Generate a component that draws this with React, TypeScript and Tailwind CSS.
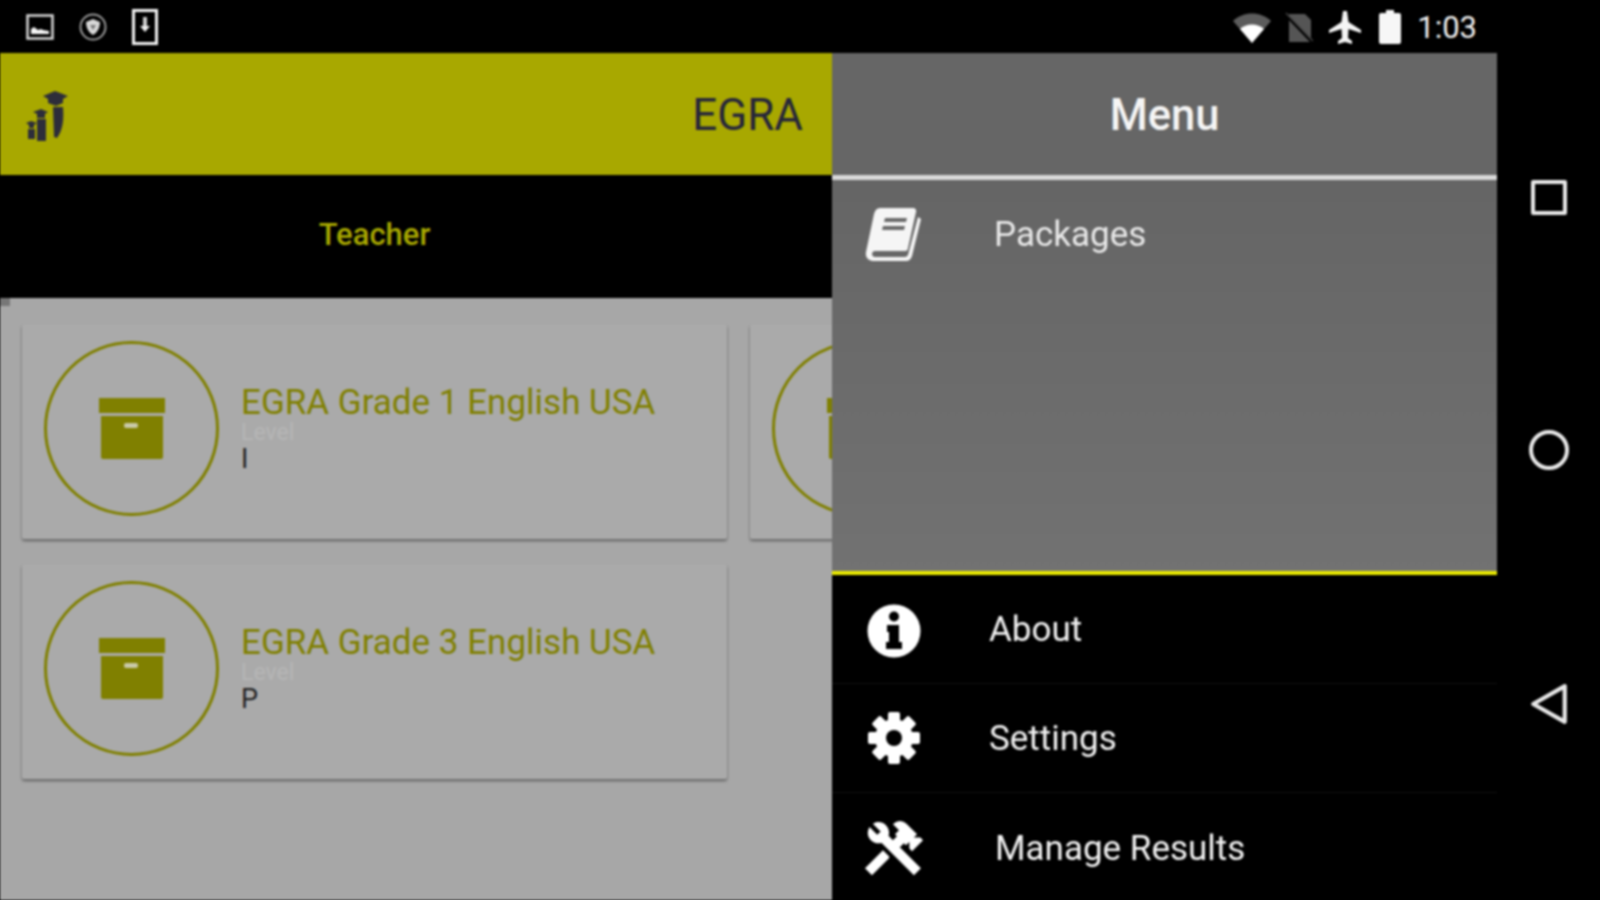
function ArchiveIcon() {
  return (
    <svg width="66" height="62" viewBox="0 0 66 62" className="shrink-0">
      <rect x="0" y="0" width="66" height="15" fill="#808000" />
      <path d="M2 18H64V59a2 2 0 0 1-2 2H4a2 2 0 0 1-2-2Z" fill="#808000" />
      <rect x="25" y="25" width="14" height="5" rx="2" fill="#c9c9a8" />
    </svg>
  );
}

function PackageCard({ title, level }: { title?: string; level?: string }) {
  return (
    <div className="flex h-[215px] w-[705px] shrink-0 items-center rounded-[2px] bg-[#aaaaaa] pb-[6px] pl-[22px] shadow-[0_2px_3px_rgba(0,0,0,0.4)]">
      <div className="flex h-[175px] w-[175px] shrink-0 items-center justify-center rounded-full border-[3px] border-[#808000]">
        <ArchiveIcon />
      </div>
      {title ? (
        <div className="ml-[22px] flex flex-col">
          <div className="text-[35px] leading-[36px] text-[#808000]">{title}</div>
          <div className="text-[23px] leading-[24px] text-[#b6b6b6]">Level</div>
          <div className="text-[27px] leading-[28px] text-[#222222]">{level}</div>
        </div>
      ) : null}
    </div>
  );
}

function DrawerRow({ icon, label, indent, divider }: { icon: React.ReactNode; label: string; indent: string; divider: boolean }) {
  return (
    <div className={`flex h-[109px] items-center pl-[33px] ${divider ? "border-b border-[#111111]" : ""}`}>
      <div className="flex w-[58px] shrink-0 items-center justify-center">{icon}</div>
      <div className={`${indent} pt-[3px] text-[35px] text-[#f2f2f2]`}>{label}</div>
    </div>
  );
}

function InfoIcon() {
  return (
    <svg width="54" height="54" viewBox="0 0 54 54" className="mt-[3px]">
      <circle cx="27" cy="27" r="26.5" fill="#ffffff" />
      <circle cx="27" cy="12.5" r="5" fill="#000000" />
      <path d="M20 21H32V38H35V45H19V38H22V28H20Z" fill="#000000" />
    </svg>
  );
}

function GearIcon() {
  const angles = [0, 45, 90, 135, 180, 225, 270, 315];
  return (
    <svg width="54" height="54" viewBox="0 0 54 54">
      {angles.map((a) => (
        <rect key={a} x="21" y="1" width="12" height="14" rx="2" fill="#ffffff" transform={`rotate(${a} 27 27)`} />
      ))}
      <circle cx="27" cy="27" r="19" fill="#ffffff" />
      <circle cx="27" cy="27" r="8" fill="#000000" />
    </svg>
  );
}

export default function App() {
  return (
    <div className="h-[900px] w-[1600px] overflow-hidden bg-black">
      <div className="flex h-[900px] w-[1600px] flex-col bg-black blur-[0.8px] font-['Roboto',sans-serif]">
        {/* status bar */}
        <div className="flex h-[53px] shrink-0 items-center justify-between pl-[26px] pr-[123px]">
          <div className="flex items-center gap-[25px]">
            <svg width="28" height="26" viewBox="0 0 28 26">
              <rect x="1.5" y="1.5" width="25" height="23" fill="none" stroke="#d8d8d8" strokeWidth="2.5" />
              <path d="M5 20V15l3-2 4 3 3-1 2 1 6 1v3Z" fill="#f5f5f5" />
            </svg>
            <svg width="28" height="28" viewBox="0 0 28 28">
              <circle cx="14" cy="14" r="12.5" fill="none" stroke="#9a9a9a" strokeWidth="2" />
              <path d="M7 9l7-3 7 3c0 6-3 11-7 13-4-2-7-7-7-13Z" fill="#d8d8d8" />
              <path d="M11 12h6l-3 5Z" fill="#777777" />
            </svg>
            <svg width="26" height="36" viewBox="0 0 26 36">
              <rect x="1.5" y="1.5" width="23" height="33" fill="none" stroke="#f2f2f2" strokeWidth="3" />
              <rect x="11" y="8" width="4" height="9" fill="#cccccc" />
              <path d="M8 17h10l-5 6Z" fill="#f2f2f2" />
            </svg>
          </div>
          <div className="flex items-center">
            <svg width="38" height="30" viewBox="0 0 38 30" className="mt-[2px]">
              <path d="M0 8C10-2 28-2 38 8L19 30Z" fill="#5c5c5c" />
              <path d="M7 16C13 10 25 10 31 16L19 30Z" fill="#ffffff" />
            </svg>
            <svg width="28" height="32" viewBox="0 0 28 32" className="ml-[14px] mt-[2px]">
              <path d="M4 2H20L26 8V30H4Z" fill="#555555" />
              <path d="M1 3L28 31" stroke="#000000" strokeWidth="3" />
              <path d="M1 1L28 29" stroke="#444444" strokeWidth="1.5" />
            </svg>
            <svg width="32" height="36" viewBox="0 0 32 36" className="ml-[16px] mt-[2px]">
              <path d="M14 1h4l1.5 11L32 20v3l-12.5-4-.5 9 4 3v3l-7-2-7 2v-3l4-3-.5-9L0 23v-3l12.5-8Z" fill="#f5f5f5" />
            </svg>
            <svg width="22" height="34" viewBox="0 0 22 34" className="ml-[18px] mt-[1px]">
              <path d="M7 0h8v3h5a2 2 0 0 1 2 2v27a2 2 0 0 1-2 2H2a2 2 0 0 1-2-2V5a2 2 0 0 1 2-2h5Z" fill="#f7f7f7" />
            </svg>
            <div className="ml-[16px] mt-[2px] text-[31px] leading-none text-[#f2f2f2]">1:03</div>
          </div>
        </div>

        <div className="flex min-h-0 flex-1">
          {/* main app */}
          <div className="flex w-[832px] shrink-0 flex-col overflow-hidden bg-[#a7a7a7]">
            <div className="flex h-[122px] shrink-0 items-center justify-between bg-[#a8a800] pl-[26px] pr-[29px]">
              <svg width="42" height="54" viewBox="0 0 42 54" className="mt-[3px]">
                <path d="M17 7L29 2l13 5-5 3v4l-7 3-8-3v-4Z" fill="#2d2d3a" />
                <path d="M27 18h10c1 12 0 23-6 31l-3-1Z" fill="#2d2d3a" />
                <path d="M7 23l8-3 7 3-3 2v4h-8v-4Z" fill="#2d2d3a" />
                <rect x="11" y="30" width="9" height="22" fill="#2d2d3a" />
                <path d="M0 34l5-2 6 2-3 2v3H3v-3Z" fill="#2d2d3a" />
                <rect x="2" y="40" width="7" height="10" fill="#2d2d3a" />
              </svg>
              <div className="pt-[1px] text-[44px] leading-none text-[#26263a]">EGRA</div>
            </div>
            <div className="h-[123px] shrink-0 bg-black">
              <div className="flex h-[121px] w-[749px] items-center justify-center">
                <div className="text-[31px] font-medium text-[#a8a800]">Teacher</div>
              </div>
            </div>
            <div className="h-[8px] w-[10px] shrink-0 bg-[#777777]" />
            <div className="flex flex-col gap-[25px] pl-[22px] pt-[18px]">
              <div className="flex gap-[23px]">
                <PackageCard title="EGRA Grade 1 English USA" level="I" />
                <PackageCard />
              </div>
              <PackageCard title="EGRA Grade 3 English USA" level="P" />
            </div>
          </div>

          {/* drawer */}
          <div className="flex w-[665px] shrink-0 flex-col">
            <div className="flex h-[122px] shrink-0 items-center justify-center bg-[#666666] pt-[3px]">
              <div className="text-[43.5px] font-medium leading-none text-[#f5f5f5]">Menu</div>
            </div>
            <div className="h-[5px] shrink-0 bg-[#d9d9d9]" />
            <div className="h-[391px] shrink-0 bg-[linear-gradient(180deg,#656565_0%,#727272_100%)]">
              <div className="flex h-[107px] items-center pl-[33px]">
                <div className="flex w-[58px] shrink-0 items-center justify-center">
                  <svg width="60" height="56" viewBox="0 0 58 54">
                    <path d="M15 1H48a3 3 0 0 1 3 4L43 41a3 3 0 0 1-3 3H10c-4 0-4 6 0 6h30a4 4 0 0 0 3-2L53 10l3 2-9 37c-1 3-3 5-6 5H9c-5 0-9-3-8-9L9 7c1-4 3-6 6-6Z" fill="#f5f5f5" />
                    <path d="M20 11H42L41 15H19Z M18 19H40L39 23H17Z" fill="#6a6a6a" />
                  </svg>
                </div>
                <div className="ml-[71px] pt-[3px] text-[35px] text-[#e8e8e8]">Packages</div>
              </div>
            </div>
            <div className="h-[4px] shrink-0 bg-[#e8e800]" />
            <div className="flex flex-col bg-black">
              <DrawerRow icon={<InfoIcon />} label="About" indent="ml-[66px]" divider />
              <DrawerRow icon={<GearIcon />} label="Settings" indent="ml-[66px]" divider />
              <DrawerRow
                icon={
                  <svg width="68" height="68" viewBox="0 0 24 24" className="shrink-0 -scale-x-100">
                    <path
                      fill="#ffffff"
                      stroke="#ffffff"
                      strokeWidth="0.5"
                      d="M13.78 15.3L19.78 21.3L21.89 19.14L15.89 13.14L13.78 15.3M17.5 10.1C17.11 10.1 16.69 10.05 16.36 9.91L4.97 21.25L2.86 19.14L10.27 11.74L8.5 9.96L7.78 10.66L6.33 9.25V12.11L5.63 12.81L2.11 9.25L2.81 8.55H5.62L4.22 7.14L7.78 3.58C8.95 2.41 10.83 2.41 12 3.58L9.89 5.74L11.3 7.14L10.59 7.85L12.38 9.63L14.2 7.75C14.06 7.42 14 7 14 6.63C14 4.66 15.56 3.11 17.5 3.11C18.09 3.11 18.61 3.25 19.08 3.53L16.41 6.2L17.91 7.7L20.58 5.03C20.86 5.5 21 6 21 6.63C21 8.55 19.45 10.1 17.5 10.1Z"
                    />
                  </svg>
                }
                label="Manage Results"
                indent="ml-[72px]"
                divider={false}
              />
            </div>
          </div>

          {/* navigation bar */}
          <div className="flex flex-1 flex-col items-center bg-black pt-[127px]">
            <div className="h-[35px] w-[36px] rounded-[2px] border-[4px] border-[#e8e8e8]" />
            <div className="mt-[215px] h-[40px] w-[40px] rounded-full border-[4px] border-[#e8e8e8]" />
            <svg width="38" height="42" viewBox="0 0 36 40" className="mt-[213px]">
              <path d="M3 20L33 3V37Z" fill="none" stroke="#e8e8e8" strokeWidth="4" strokeLinejoin="round" />
            </svg>
          </div>
        </div>
      </div>
    </div>
  );
}
